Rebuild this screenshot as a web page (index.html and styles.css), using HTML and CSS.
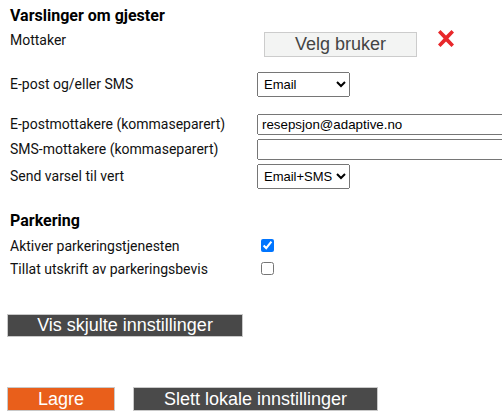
FILE: index.html
```html
<!DOCTYPE html>
<html lang="no">
<head>
    <meta charset="UTF-8">
    <meta name="viewport" content="width=device-width, initial-scale=1.0">
    <title>Innstillinger</title>
    <link rel="stylesheet" href="styles.css">
</head>
<body>
    <div class="settings">
        <h3 class="section-title">Varslinger om gjester</h3>

        <div class="row row-top">
            <label class="row-label">Mottaker</label>
            <div class="row-control">
                <button class="btn btn-pick" type="button">Velg bruker</button>
                <svg class="icon-remove" width="18" height="19" viewBox="0 0 18 19">
                    <path d="M1 3.5 L3.5 1 L9 6.6 L14.5 1 L17 3.5 L11.4 9.5 L17 15.5 L14.5 18 L9 12.4 L3.5 18 L1 15.5 L6.6 9.5 Z" fill="#e8282b"/>
                </svg>
            </div>
        </div>

        <div class="row row-mode">
            <label class="row-label" for="mode">E-post og/eller SMS</label>
            <div class="row-control">
                <select id="mode" class="field-select">
                    <option>Email</option>
                    <option>SMS</option>
                    <option>Email+SMS</option>
                </select>
            </div>
        </div>

        <div class="group">
            <div class="row">
                <label class="row-label" for="mail">E-postmottakere (kommaseparert)</label>
                <div class="row-control">
                    <input id="mail" class="field-text" type="text" value="resepsjon@adaptive.no">
                </div>
            </div>
            <div class="row">
                <label class="row-label" for="sms">SMS-mottakere (kommaseparert)</label>
                <div class="row-control">
                    <input id="sms" class="field-text" type="text" value="">
                </div>
            </div>
            <div class="row">
                <label class="row-label" for="host">Send varsel til vert</label>
                <div class="row-control">
                    <select id="host" class="field-select">
                        <option>Email</option>
                        <option>SMS</option>
                        <option selected>Email+SMS</option>
                    </select>
                </div>
            </div>
        </div>

        <h3 class="section-title section-parking">Parkering</h3>

        <div class="group">
            <div class="row row-check">
                <label class="row-label" for="park">Aktiver parkeringstjenesten</label>
                <div class="row-control">
                    <input id="park" type="checkbox" checked>
                </div>
            </div>
            <div class="row row-check">
                <label class="row-label" for="print">Tillat utskrift av parkeringsbevis</label>
                <div class="row-control">
                    <input id="print" type="checkbox">
                </div>
            </div>
        </div>

        <button class="btn btn-dark btn-hidden" type="button">Vis skjulte innstillinger</button>

        <div class="actions">
            <button class="btn btn-save" type="button">Lagre</button>
            <button class="btn btn-dark btn-reset" type="button">Slett lokale innstillinger</button>
        </div>
    </div>
</body>
</html>
```

FILE: styles.css
```css
*
{
  box-sizing: border-box;
}
html, body{
  margin: 0;
  padding: 0;
  overflow: hidden;
  background: #fff;
}
body{
  font-family: Roboto, "Liberation Sans", sans-serif;
  font-size: 14px;
  color: #111;
}
.settings{
  padding: 6px 0 0 7px;
}
.section-title{
  margin: 0 0 6px;
  padding-left: 3px;
  font-size: 16px;
  line-height: 20px;
  font-weight: bold;
  color: #000;
}
.section-parking{
  margin-top: 22px;
  margin-bottom: 5px;
}
.row{
  display: grid;
  grid-template-columns: 250px 1fr;
  align-items: baseline;
}
.row-label{
  padding-left: 3px;
  line-height: 16px;
}
.row-control{
  display: flex;
  align-items: baseline;
}
.row-top{
  align-items: start;
  margin-bottom: 15px;
}
.row-top .row-control{
  align-items: flex-start;
}
.row-mode{
  margin-bottom: 17px;
}
.group{
  display: grid;
  gap: 4px;
}
.row-check{
  align-items: center;
}
.row-check .row-control{
  align-items: center;
}
.row-check input{
  margin: 3px 3px 3px 4px;
  width: 13px;
  height: 13px;
}
.field-select{
  width: 93px;
  height: 25px;
  font-family: "Liberation Sans", Arial, sans-serif;
  font-size: 13px;
  color: #000;
  padding: 0 0 0 2px;
}
.field-text{
  width: 262px;
  height: 21px;
  padding: 1px 3px;
  font-family: "Liberation Sans", Arial, sans-serif;
  font-size: 13.33px;
  color: #000;
}
.icon-remove{
  margin: -3px 0 0 20px;
}

/* buttons */
.btn{
  display: block;
  padding: 0;
  border: 1px solid #c9c9c9;
  border-radius: 0;
  font-family: "Liberation Sans", Arial, sans-serif;
  font-size: 18px;
  line-height: 21px;
  color: #fff;
  cursor: pointer;
}
.btn-pick{
  width: 153px;
  height: 25px;
  margin-left: 7px;
  background: #f3f4f3;
  border-color: #ccc;
  color: #444;
}
.btn-dark{
  background: #484848;
}
.btn-hidden{
  width: 236px;
  height: 23px;
  margin-top: 36px;
}
.actions{
  display: flex;
  gap: 18px;
  margin-top: 50px;
}
.btn-save{
  width: 108px;
  height: 24px;
  background: #e95f1b;
}
.btn-reset{
  width: 245px;
  height: 24px;
  background: #4a4a4a;
}
```
